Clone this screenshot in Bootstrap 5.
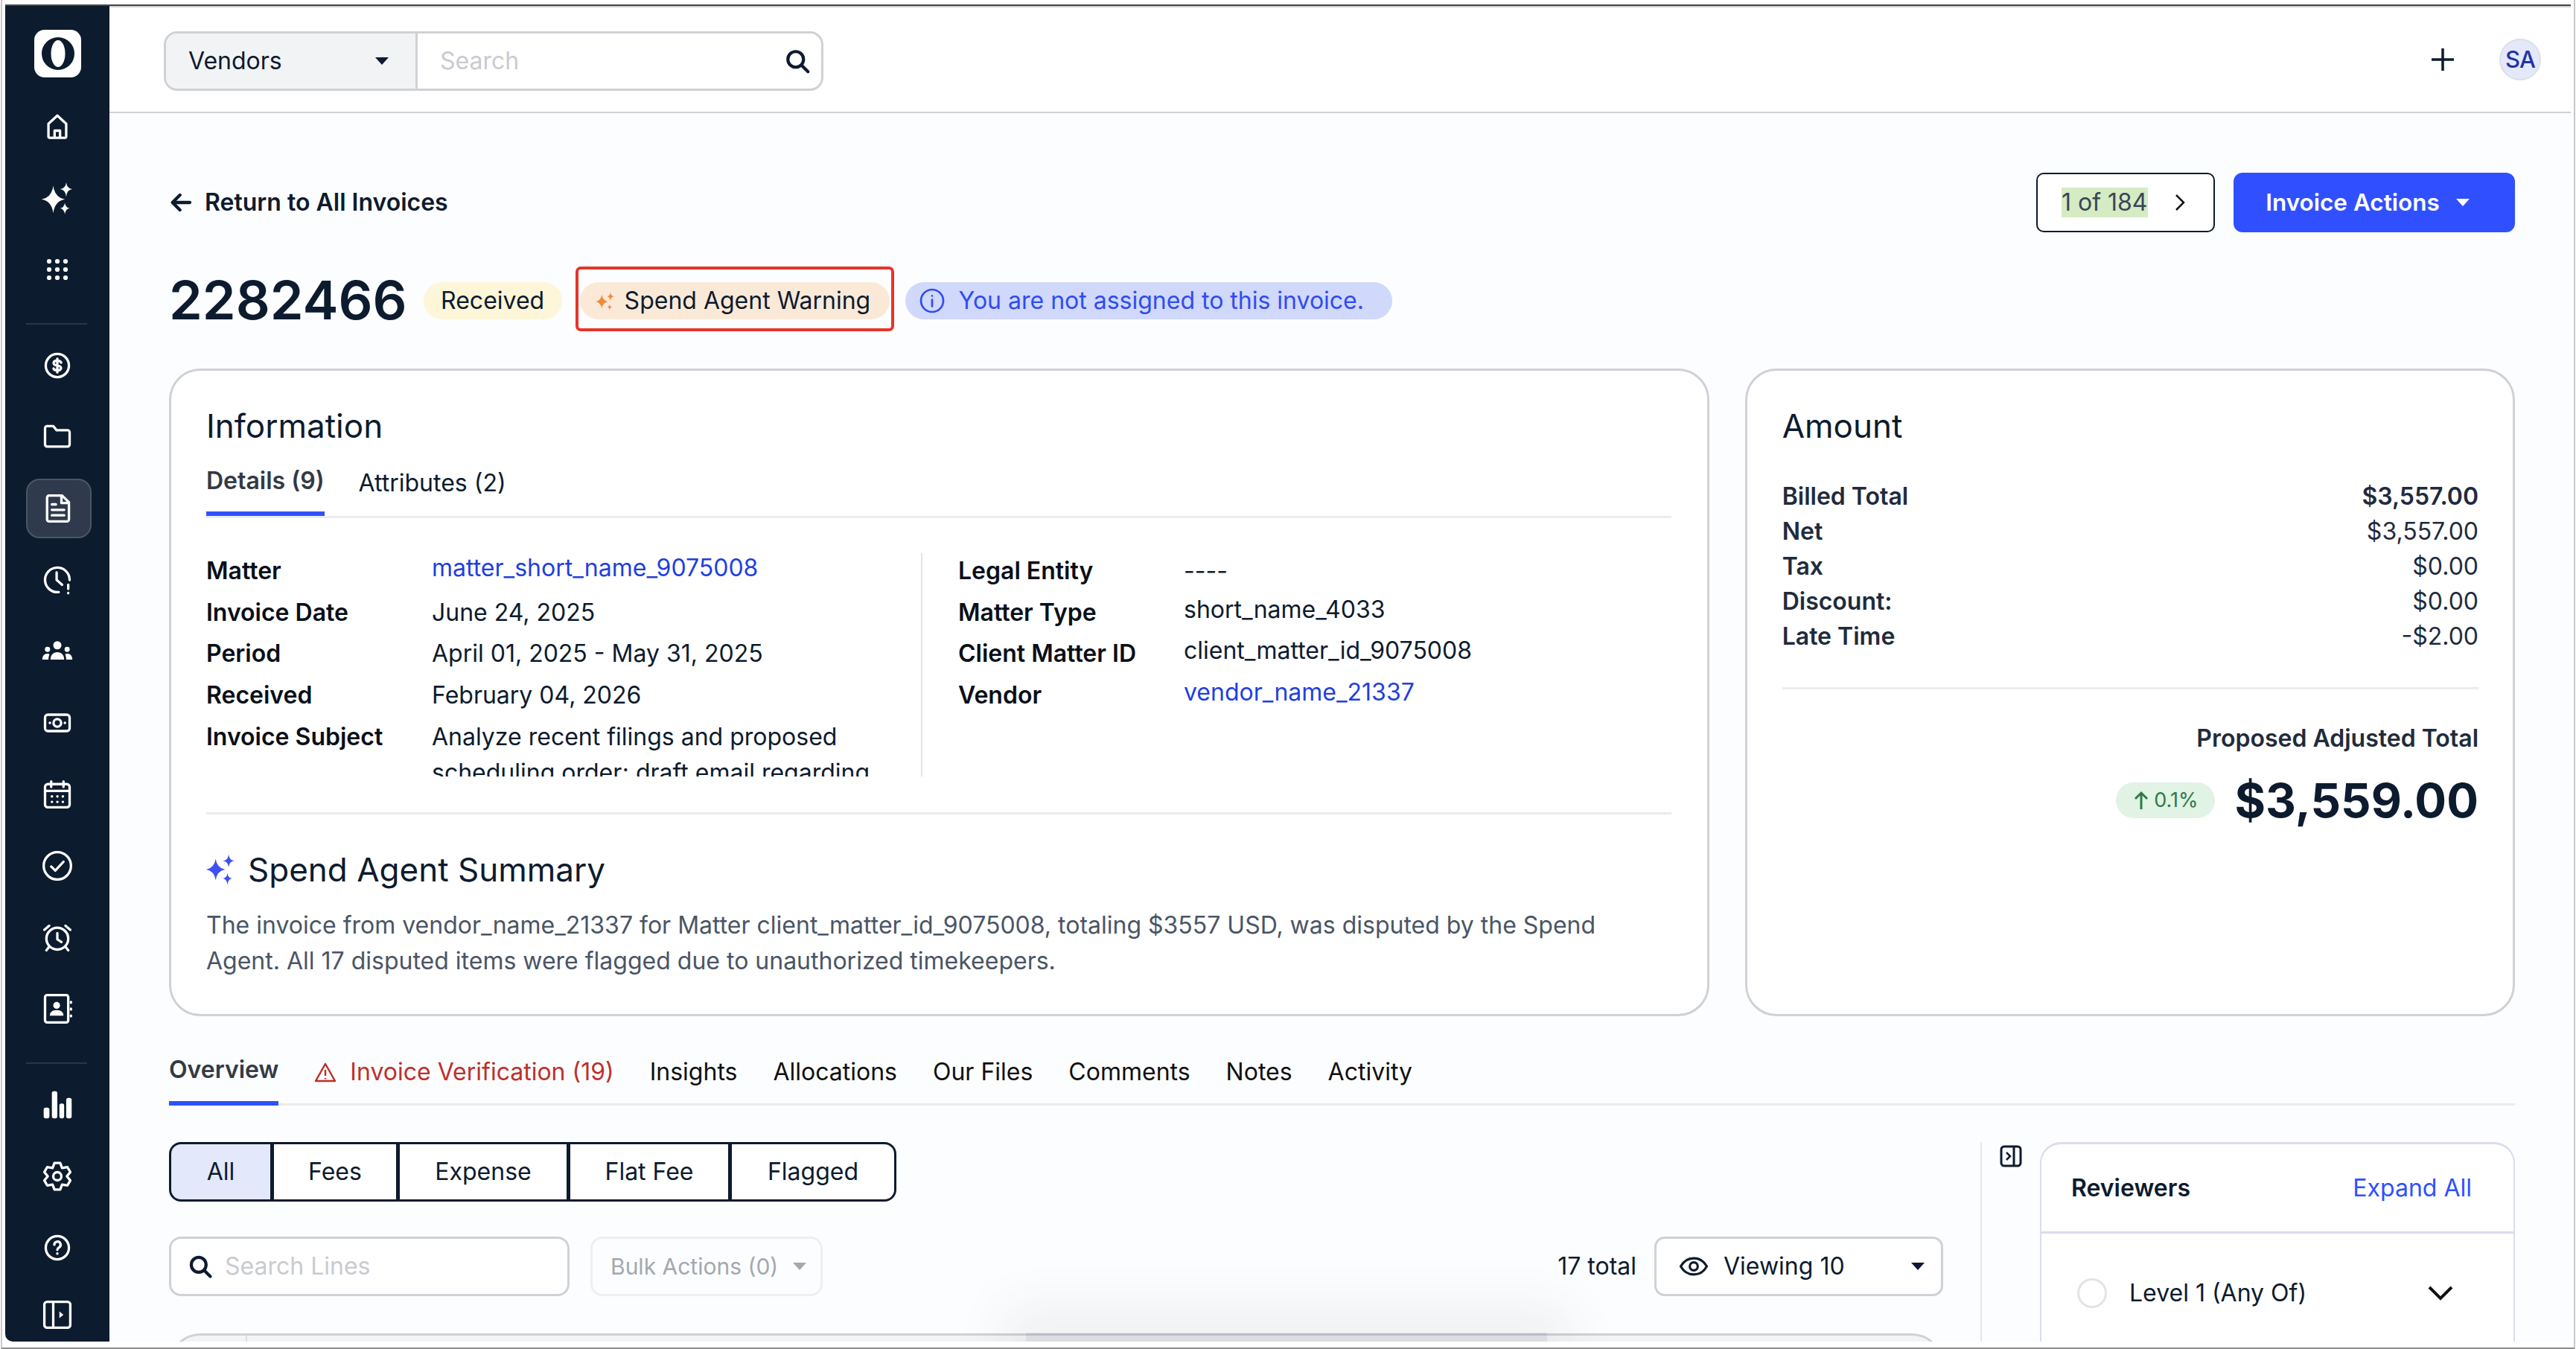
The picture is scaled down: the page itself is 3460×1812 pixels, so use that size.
<!DOCTYPE html>
<html lang="en">
<head>
    <meta charset="UTF-8">
    <meta name="viewport" content="width=device-width, initial-scale=1">
    <title>Invoice 2282466</title>
    <link href="https://cdn.jsdelivr.net/npm/bootstrap@5.3.3/dist/css/bootstrap.min.css" rel="stylesheet">
    <script src="https://cdn.jsdelivr.net/npm/bootstrap@5.3.3/dist/js/bootstrap.bundle.min.js"></script>
    <style>
        :root {
            --navy: #0d1b2e;
            --blue: #3050ff;
            --link: #1f3fe0;
            --line: #cfd1d6;
            --soft-line: #ebecf0;
        }

        html, body {
            height: 100%;
            overflow: hidden;
            background: #fff;
        }

        body {
            font-family: Inter, "Noto Sans", sans-serif;
            font-size: 32px;
            line-height: 48px;
            color: var(--navy);
        }

        /* screenshot frame round the app */
        .shot-frame {
            height: 1812px;
            margin: 0 1px;
            padding: 6px 4px 8px;
            border-left: 2px solid #c8c8c8;
            border-right: 2px solid #c8c8c8;
            border-bottom: 2px solid #8a8a8a;
        }
        .app-window {
            position: relative;
            height: 100%;
            border-top: 2px solid #444;
            overflow: hidden;
            background: #fcfdfe;
        }

        /* left rail */
        .rail {
            width: 140px;
            flex: none;
            background: var(--navy);
            color: #fff;
            border-radius: 0 0 0 10px;
        }
        .rail-logo {
            width: 63px;
            height: 64px;
            margin: 32px 0 18px 39px;
            background: #fff;
            border-radius: 14px;
        }
        .rail-slot {
            height: 96px;
            width: 100%;
        }
        .rail-slot svg {
            width: 44px;
            height: 44px;
        }
        .rail-slot.is-active span {
            width: 88px;
            height: 80px;
            margin-left: 4px;
            padding-right: 4px;
            background: #2f3b4d;
            border: 2px solid #4b5665;
            border-radius: 18px;
        }
        .rail-slot-last {
            margin-top: -6px;
        }
        .rail-rule {
            height: 2px;
            width: 82px;
            margin: 24px 0 7px 28px;
            background: #2a3647;
        }
        .ico {
            fill: none;
            stroke: currentColor;
            stroke-width: 1.8;
            stroke-linecap: round;
            stroke-linejoin: round;
        }
        .ico-fill {
            fill: currentColor;
            stroke: none;
        }

        /* top bar */
        .top-bar {
            height: 144px;
            flex: none;
            background: #fff;
            border-top: 2px solid #cfd1d6;
            border-bottom: 2px solid var(--line);
            padding: 0 40px 0 73px;
        }
        .scope-search {
            width: 886px;
            height: 80px;
            margin-top: 4px;
            border: 3px solid var(--line);
            border-radius: 18px;
            overflow: hidden;
            background: #fff;
        }
        .scope-pick {
            width: 338px;
            padding: 0 36px 0 30px;
            background: #f2f3f5;
            border-right: 3px solid var(--line);
        }
        .scope-input {
            padding: 0 14px 0 30px;
            color: #c9cbd0;
        }
        .caret-down {
            width: 0;
            height: 0;
            flex: none;
            border-left: 9px solid transparent;
            border-right: 9px solid transparent;
            border-top: 10px solid currentColor;
        }
        .avatar-sa {
            width: 56px;
            height: 56px;
            border-radius: 50%;
            background: #e4e8fb;
            border: 2px solid #dcdfe8;
            color: #1f35a8;
            font-size: 31px;
            font-weight: 500;
            letter-spacing: -1px;
        }

        /* page body */
        .page-body {
            padding: 80px 75px 0 80px;
            min-width: 0;
        }
        .back-link {
            font-weight: 600;
            color: var(--navy);
            text-decoration: none;
            gap: 16px;
        }
        .pager-btn {
            width: 240px;
            height: 80px;
            padding: 0 37px 0 32px;
            border: 2px solid var(--navy);
            border-radius: 10px;
            background: #fff;
            color: #3a4556;
            font-size: 32px;
        }
        .pager-count {
            background: #d5ebc4;
            padding: 0;
            line-height: 40px;
        }
        .action-btn {
            width: 378px;
            height: 80px;
            margin-left: 25px;
            background: var(--blue);
            color: #fff;
            border: 0;
            border-radius: 12px;
            font-size: 31.5px;
            font-weight: 600;
            gap: 22px;
            padding: 0 18px 0 0;
        }
        .title-row {
            margin-top: 46px;
            height: 87px;
        }
        .invoice-no {
            font-size: 72px;
            font-weight: 600;
            line-height: 90px;
            height: 87px;
            margin: 0 22px 0 0;
        }
        .tag-pill {
            height: 50px;
            margin-top: 4px;
            border-radius: 25px;
            padding: 0 24px;
            font-weight: 400;
            white-space: nowrap;
        }
        .tag-received {
            background: #fdf6d8;
            width: 186px;
            justify-content: center;
        }
        .warn-box {
            margin-left: 18px;
            width: 428px;
            height: 87px;
            border: 4px solid #e7342a;
            border-radius: 7px;
            padding: 0 2px;
        }
        .tag-warn {
            width: 100%;
            padding: 0 0 0 20px;
            background: #fbe9d8;
            gap: 12px;
        }
        .tag-info {
            margin-left: 15px;
            width: 654px;
            background: #d0d8fb;
            color: #2f4df0;
            padding: 0 0 0 18px;
            gap: 18px;
        }

        /* cards */
        .card-pair {
            display: grid;
            grid-template-columns: 2fr 1fr;
            gap: 48px;
            margin-top: 50px;
        }
        .panel-card {
            height: 870px;
            background: #fff;
            border: 3px solid var(--line);
            border-radius: 42px;
            padding: 46px 48px 0 47px;
        }
        .panel-amount {
            padding-right: 46px;
        }
        .panel-title {
            font-size: 44px;
            font-weight: 400;
            line-height: 56px;
            margin: 0;
        }
        .sub-tabs {
            margin-top: 22px;
            border-bottom: 3px solid var(--soft-line);
            gap: 46px;
            height: 74px;
        }
        .sub-tabs .nav-link {
            padding: 3px 0 0;
            height: 71px;
            color: var(--navy);
            line-height: 48px;
        }
        .sub-tabs .nav-link.active {
            color: #333a44;
            font-weight: 600;
            padding-top: 0;
            border-bottom: 6px solid var(--blue);
        }
        .detail-wrap {
            margin-top: 47px;
            height: 300px;
            overflow: hidden;
        }
        .detail-col {
            width: 962px;
            flex: none;
            border-right: 2px solid #e3e5ec;
            padding-right: 40px;
        }
        .detail-col-2 {
            padding-left: 48px;
            flex: 1;
        }
        .detail-grid {
            display: grid;
            grid-template-columns: 303px 1fr;
            row-gap: 7.7px;
            line-height: 48px;
        }
        .detail-grid dt {
            font-weight: 600;
            color: #0a0f18;
            margin: 0;
        }
        .detail-grid dd {
            margin: 0;
        }
        .detail-grid dd.is-raised {
            margin-top: -4px;
        }
        .detail-grid dd a {
            color: var(--link);
            text-decoration: none;
        }
        .info-rule {
            height: 3px;
            margin: 48px 0 0;
            background: var(--soft-line);
        }
        .summary-title {
            margin-top: 46px;
            gap: 18px;
        }
        .summary-copy {
            margin: 23px 0 0;
            color: #4a5565;
        }
        .amount-list {
            margin-top: 43px;
            line-height: 47px;
            color: #1f2b3c;
        }
        .amount-list b {
            font-weight: 600;
        }
        .amount-rule {
            height: 3px;
            margin-top: 45px;
            background: var(--soft-line);
        }
        .proposed {
            margin-top: 42px;
            font-weight: 600;
            color: #1f2b3c;
            text-align: right;
        }
        .proposed-total {
            margin-top: 19px;
            gap: 26px;
        }
        .delta-pill {
            background: #e0f3e4;
            color: #2f7a46;
            width: 133px;
            height: 48px;
            border-radius: 24px;
            font-size: 27px;
            gap: 6px;
        }
        .total-big {
            font-size: 63.5px;
            font-weight: 700;
            line-height: 80px;
            color: var(--navy);
        }

        /* lower tabs */
        .main-tabs {
            margin-top: 46px;
            height: 74px;
            border-bottom: 3px solid var(--soft-line);
            gap: 48px;
        }
        .main-tabs .nav-link {
            padding: 5px 0 0;
            height: 74px;
            color: #101010;
        }
        .main-tabs .nav-link.active {
            padding-top: 2px;
            color: #333a44;
            font-weight: 600;
            border-bottom: 6px solid var(--blue);
        }
        .main-tabs .nav-link.is-alert {
            color: #bf2f2a;
            display: flex;
            gap: 18px;
            align-items: flex-start;
        }

        .lower-grid {
            display: grid;
            grid-template-columns: 1fr 718px;
            margin-top: 49px;
        }
        .filter-group .btn {
            height: 80px;
            background: #fff;
            border: 3px solid var(--navy);
            color: var(--navy);
            font-size: 32px;
            padding: 0;
            border-radius: 16px;
        }
        .filter-group .btn.active {
            background: #e4e8fb;
            color: var(--navy);
        }
        .tools-row {
            margin-top: 47px;
            margin-right: 50px;
        }
        .lines-search {
            width: 538px;
            height: 80px;
            border: 3px solid var(--line);
            border-radius: 16px;
            padding: 0 22px;
            gap: 16px;
            background: #fff;
            color: #c9cbd0;
        }
        .bulk-btn {
            width: 312px;
            height: 80px;
            margin-left: 28px;
            border: 3px solid #eeeff2;
            border-radius: 16px;
            padding: 0 24px;
            color: #a4a8b0;
            font-size: 30px;
            gap: 20px;
            white-space: nowrap;
        }
        .viewing-btn {
            width: 388px;
            height: 80px;
            margin-left: 24px;
            background: #fff;
            border: 3px solid var(--line);
            border-radius: 14px;
            padding: 0 22px 0 30px;
            gap: 20px;
        }
        .lines-table {
            height: 60px;
            margin-top: 50px;
            margin-right: 50px;
            border: 3px solid var(--line);
            border-radius: 42px 42px 0 0;
            background: #f3f4f6;
            padding-left: 100px;
        }
        .lines-table div {
            height: 100%;
            border-left: 2px solid #dcdde1;
        }
        .side-col {
            border-left: 2px solid #e3e5ec;
            padding-left: 24px;
            gap: 24px;
            align-items: flex-start;
            height: 300px;
        }
        .reviewers-card {
            width: 638px;
            flex: none;
            background: #fff;
            border: 2px solid #dedbee;
            border-top-width: 3px;
            border-radius: 28px 28px 0 0;
            height: 300px;
        }
        .reviewers-head {
            height: 120px;
            padding: 0 56px 0 40px;
            border-bottom: 3px solid #dedbee;
        }
        .reviewers-head a {
            color: var(--blue);
            text-decoration: none;
        }
        .reviewers-row {
            padding: 0 80px 0 48px;
            height: 160px;
            gap: 30px;
        }
        .radio-ring {
            width: 40px;
            height: 40px;
            border-radius: 50%;
            border: 3px solid #e3e4e8;
        }
        /* smudge in the screenshot, lies over the table head */
        .shadow-blob {
            position: absolute;
            left: 1371px;
            bottom: 0;
            width: 700px;
            height: 12px;
            background: rgba(60, 60, 70, .12);
            box-shadow: 0 0 70px 30px rgba(60, 60, 70, .08);
        }
    </style>
</head>
<body>
<div class="shot-frame">
<div class="app-window d-flex">
    <aside class="rail">
        <div class="rail-logo d-flex align-items-center justify-content-center">
            <svg width="46" height="46" viewBox="0 0 46 46"><ellipse cx="23" cy="23" rx="22" ry="22" fill="#0d1b2e"/><ellipse cx="23" cy="23" rx="9.500" ry="18" fill="#fff"/></svg>
        </div>
        <div class="rail-slot d-flex align-items-center justify-content-center">
            <svg viewBox="0 0 24 24" class="ico"><path d="M12 4 5.500 10v9.200a1 1 0 0 0 1 1h11a1 1 0 0 0 1-1V10z"/><path d="M10 20v-5h4v5"/></svg>
        </div>
        <div class="rail-slot d-flex align-items-center justify-content-center">
            <svg viewBox="0 0 24 24"><g class="ico-fill"><path d="M9 3Q10.200 11.800 17.500 13Q10.200 14.200 9 23Q7.800 14.200 .5 13Q7.800 11.800 9 3Z"/><path d="M18.500 .5Q19 5 23 5.500Q19 6 18.500 11Q18 6 14 5.500Q18 5 18.500 .5Z"/><path d="M17.500 15.500Q18 19 21 19.500Q18 20 17.500 24Q17 20 14 19.500Q17 19 17.500 15.500Z"/></g></svg>
        </div>
        <div class="rail-slot d-flex align-items-center justify-content-center">
            <svg viewBox="0 0 24 24"><g class="ico-fill"><circle cx="6" cy="6" r="1.700"/><circle cx="12" cy="6" r="1.700"/><circle cx="18" cy="6" r="1.700"/><circle cx="6" cy="12" r="1.700"/><circle cx="12" cy="12" r="1.700"/><circle cx="18" cy="12" r="1.700"/><circle cx="6" cy="18" r="1.700"/><circle cx="12" cy="18" r="1.700"/><circle cx="18" cy="18" r="1.700"/></g></svg>
        </div>
        <div class="rail-rule"></div>
        <div class="rail-slot d-flex align-items-center justify-content-center">
            <svg viewBox="0 0 24 24" class="ico"><circle cx="12" cy="12" r="8.500"/><path d="M14.800 9.800c-.4-.9-1.400-1.400-2.800-1.400-1.600 0-2.700.7-2.700 1.800s1 1.500 2.700 1.800 2.700.7 2.700 1.800-1.100 1.800-2.700 1.800c-1.400 0-2.400-.5-2.800-1.400M12 7v10"/></svg>
        </div>
        <div class="rail-slot d-flex align-items-center justify-content-center">
            <svg viewBox="0 0 24 24" class="ico"><path d="M3 5.500A1.500 1.500 0 0 1 4.500 4H9l2.500 3h8A1.500 1.500 0 0 1 21 8.500v9a1.500 1.500 0 0 1-1.500 1.500h-15A1.500 1.500 0 0 1 3 17.500z"/></svg>
        </div>
        <div class="rail-slot is-active d-flex align-items-center justify-content-center">
            <span class="d-flex align-items-center justify-content-center">
                <svg viewBox="0 0 24 24" class="ico"><path d="M4.500 4A1.500 1.500 0 0 1 6 2.500h9.500l5 5V20a1.500 1.500 0 0 1-1.500 1.500H6A1.500 1.500 0 0 1 4.500 20z"/><path d="M15 3v5h5M8 9h3M8 13h9M8 17h9"/></svg>
            </span>
        </div>
        <div class="rail-slot d-flex align-items-center justify-content-center">
            <svg viewBox="0 0 24 24" class="ico"><path d="M21 12A9 9 0 1 0 13 20.900"/><path d="M11.500 6.500V12l4 3.500"/><path d="M20 15.500v3M20 21.500v.2"/></svg>
        </div>
        <div class="rail-slot d-flex align-items-center justify-content-center">
            <svg viewBox="0 0 24 24"><g class="ico-fill"><circle cx="12" cy="7.500" r="3"/><path d="M7 18c0-3.500 2-5.500 5-5.500s5 2 5 5.500z"/><circle cx="4.800" cy="10.500" r="1.900"/><path d="M1 18c0-2.500 1.300-4.300 3.800-4.300.6 0 1.100.1 1.500.3-.5 1.100-.8 2.500-.8 4z"/><circle cx="19.200" cy="10.500" r="1.900"/><path d="M23 18c0-2.500-1.300-4.300-3.800-4.300-.6 0-1.100.1-1.500.3.5 1.100.8 2.500.8 4z"/></g></svg>
        </div>
        <div class="rail-slot d-flex align-items-center justify-content-center">
            <svg viewBox="0 0 24 24" class="ico"><rect x="3" y="6" width="18" height="12" rx="2"/><circle cx="12" cy="12" r="2.800"/><path d="M6.500 12h.1M17.500 12h.1"/></svg>
        </div>
        <div class="rail-slot d-flex align-items-center justify-content-center">
            <svg viewBox="0 0 24 24" class="ico"><rect x="3" y="4.500" width="18" height="17" rx="2"/><path d="M3 9.500h18M7.500 2.500v4M16.500 2.500v4M8 13.500h.1M12 13.500h.1M16 13.500h.1M8 17.500h.1M12 17.500h.1M16 17.500h.1"/></svg>
        </div>
        <div class="rail-slot d-flex align-items-center justify-content-center">
            <svg viewBox="0 0 24 24" class="ico"><circle cx="12" cy="12" r="10"/><path d="M7.500 12.500l3 3 6-6.500"/></svg>
        </div>
        <div class="rail-slot d-flex align-items-center justify-content-center">
            <svg viewBox="0 0 24 24" class="ico"><circle cx="12" cy="13" r="8"/><path d="M12 9v4.500l3 2M2.500 6.500 6 3.500M21.500 6.500 18 3.500M6 19l-2 2.500M18 19l2 2.500"/></svg>
        </div>
        <div class="rail-slot d-flex align-items-center justify-content-center">
            <svg viewBox="0 0 24 24" class="ico"><rect x="3" y="2" width="17" height="20" rx="1.500"/><path d="M22 7v.5M22 12v.5M22 17v.5"/><circle cx="11.500" cy="9.500" r="2.500" class="ico-fill"/><path d="M6.500 17c0-2.500 2-4 5-4s5 1.500 5 4z" class="ico-fill"/></svg>
        </div>
        <div class="rail-rule"></div>
        <div class="rail-slot d-flex align-items-center justify-content-center">
            <svg viewBox="0 0 24 24"><g class="ico-fill"><rect x="2" y="14" width="4.200" height="8" rx="1.500"/><rect x="8" y="2" width="4" height="20" rx="1.500"/><rect x="13.500" y="11" width="3.500" height="11" rx="1.500"/><rect x="18.500" y="7" width="4" height="15" rx="1.500"/></g></svg>
        </div>
        <div class="rail-slot d-flex align-items-center justify-content-center">
            <svg viewBox="0 0 24 24" class="ico"><path d="M9.920 2.220H14.080L15.500 5.940 19.430 5.310 21.510 8.910 19 12 21.510 15.090 19.430 18.690 15.500 18.060 14.080 21.780H9.920L8.500 18.060 4.570 18.690 2.490 15.090 5 12 2.490 8.910 4.570 5.310 8.500 5.940Z"/><circle cx="12" cy="12" r="3"/></svg>
        </div>
        <div class="rail-slot d-flex align-items-center justify-content-center">
            <svg viewBox="0 0 24 24" class="ico"><circle cx="12" cy="12" r="8.500"/><path d="M9.800 9.800a2.300 2.300 0 1 1 3.400 2c-.8.500-1.200.9-1.200 1.700M12 16.200v.1"/></svg>
        </div>
        <div class="rail-slot rail-slot-last d-flex align-items-center justify-content-center">
            <svg viewBox="0 0 24 24" class="ico"><rect x="2.500" y="2.500" width="19" height="19" rx="2"/><path d="M9 2.500v19"/><path d="M13.500 9.500l3 2.500-3 2.500z" class="ico-fill"/></svg>
        </div>
    </aside>

    <div class="flex-grow-1 d-flex flex-column" style="min-width:0">
        <header class="top-bar d-flex align-items-center justify-content-between">
            <div class="scope-search d-flex">
                <div class="scope-pick d-flex align-items-center justify-content-between">Vendors <span class="caret-down"></span></div>
                <div class="scope-input flex-grow-1 d-flex align-items-center justify-content-between">
                    <span>Search</span>
                    <svg width="36" height="36" viewBox="0 0 24 24" fill="none" stroke="#0d1b2e" stroke-width="2.800" stroke-linecap="round"><circle cx="10.500" cy="10.500" r="7"/><path d="M16 16l5.500 5.500"/></svg>
                </div>
            </div>
            <div class="d-flex align-items-center" style="gap:60px">
                <svg width="32" height="32" viewBox="0 0 32 32" stroke="#0d1b2e" stroke-width="3.500"><path d="M16 1v30M1 16h30"/></svg>
                <div class="avatar-sa d-flex align-items-center justify-content-center">SA</div>
            </div>
        </header>

        <main class="page-body flex-grow-1">
            <div class="d-flex align-items-center justify-content-between">
                <a href="#" class="back-link d-flex align-items-center">
                    <svg width="32" height="32" viewBox="0 0 24 24" fill="none" stroke="#0d1b2e" stroke-width="3.200" stroke-linecap="round" stroke-linejoin="round"><path d="M21 12H4M11 4.500 3.500 12l7.500 7.500"/></svg>
                    Return to All Invoices
                </a>
                <div class="d-flex">
                    <button class="btn pager-btn d-flex align-items-center justify-content-between" type="button">
                        <span class="pager-count">1 of 184</span>
                        <svg width="16" height="24" viewBox="0 0 16 24" fill="none" stroke="#111" stroke-width="2.500"><path d="M3 2l10 10L3 22"/></svg>
                    </button>
                    <button class="btn action-btn d-flex align-items-center justify-content-center" type="button">Invoice Actions <span class="caret-down"></span></button>
                </div>
            </div>

            <div class="title-row d-flex align-items-center">
                <h1 class="invoice-no">2282466</h1>
                <span class="tag-pill tag-received d-flex align-items-center">Received</span>
                <div class="warn-box d-flex align-items-center">
                    <span class="tag-pill tag-warn d-flex align-items-center">
                        <svg width="28" height="28" viewBox="0 0 24 24" fill="#f08a3c"><path d="M8 5Q9 12 15 13Q9 14 8 21Q7 14 1 13Q7 12 8 5Z"/><path d="M18 2Q18.400 6.600 22 7Q18.400 7.400 18 12Q17.600 7.400 14 7Q17.600 6.600 18 2Z"/><path d="M17 16Q17.300 18.700 20 19Q17.300 19.300 17 23Q16.700 19.300 14 19Q16.700 18.700 17 16Z"/></svg>
                        Spend Agent Warning
                    </span>
                </div>
                <span class="tag-pill tag-info d-flex align-items-center">
                    <svg width="36" height="36" viewBox="0 0 24 24" fill="none" stroke="#2f4df0" stroke-width="1.800" stroke-linecap="round"><circle cx="12" cy="12" r="10"/><path d="M12 11v6M12 7.500v.1"/></svg>
                    You are not assigned to this invoice.
                </span>
            </div>

            <div class="card-pair">
                <section class="panel-card">
                    <h2 class="panel-title">Information</h2>
                    <ul class="nav sub-tabs">
                        <li class="nav-item"><a class="nav-link active" href="#">Details (9)</a></li>
                        <li class="nav-item"><a class="nav-link" href="#">Attributes (2)</a></li>
                    </ul>
                    <div class="detail-wrap d-flex">
                        <div class="detail-col">
                            <dl class="detail-grid m-0">
                                <dt>Matter</dt><dd class="is-raised"><a href="#">matter_short_name_9075008</a></dd>
                                <dt>Invoice Date</dt><dd>June 24, 2025</dd>
                                <dt>Period</dt><dd>April 01, 2025 - May 31, 2025</dd>
                                <dt>Received</dt><dd>February 04, 2026</dd>
                                <dt>Invoice Subject</dt><dd>Analyze recent filings and proposed scheduling order; draft email regarding</dd>
                            </dl>
                        </div>
                        <div class="detail-col-2">
                            <dl class="detail-grid m-0">
                                <dt>Legal Entity</dt><dd>----</dd>
                                <dt>Matter Type</dt><dd class="is-raised">short_name_4033</dd>
                                <dt>Client Matter ID</dt><dd class="is-raised">client_matter_id_9075008</dd>
                                <dt>Vendor</dt><dd class="is-raised"><a href="#">vendor_name_21337</a></dd>
                            </dl>
                        </div>
                    </div>
                    <div class="info-rule"></div>
                    <div class="summary-title d-flex align-items-center">
                        <svg width="38" height="42" viewBox="0 0 24 26" fill="#3f4ff0"><path d="M8 4Q9.200 11.800 16 13Q9.200 14.200 8 22Q6.800 14.200 0 13Q6.800 11.800 8 4Z"/><path d="M19 0Q19.400 5.100 24 5.500Q19.400 5.900 19 11Q18.600 5.900 14 5.500Q18.600 5.100 19 0Z"/><path d="M18 16Q18.400 20.100 22 20.500Q18.400 20.900 18 26Q17.600 20.900 14 20.500Q17.600 20.100 18 16Z"/></svg>
                        <h2 class="panel-title">Spend Agent Summary</h2>
                    </div>
                    <p class="summary-copy">The invoice from vendor_name_21337 for Matter client_matter_id_9075008, totaling $3557 USD, was disputed by the Spend Agent. All 17 disputed items were flagged due to unauthorized timekeepers.</p>
                </section>

                <section class="panel-card panel-amount">
                    <h2 class="panel-title">Amount</h2>
                    <div class="amount-list">
                        <div class="d-flex justify-content-between"><b>Billed Total</b><b>$3,557.00</b></div>
                        <div class="d-flex justify-content-between"><b>Net</b><span>$3,557.00</span></div>
                        <div class="d-flex justify-content-between"><b>Tax</b><span>$0.00</span></div>
                        <div class="d-flex justify-content-between"><b>Discount:</b><span>$0.00</span></div>
                        <div class="d-flex justify-content-between"><b>Late Time</b><span>-$2.00</span></div>
                    </div>
                    <div class="amount-rule"></div>
                    <div class="proposed">Proposed Adjusted Total</div>
                    <div class="proposed-total d-flex align-items-center justify-content-end">
                        <span class="delta-pill d-flex align-items-center justify-content-center">
                            <svg width="22" height="26" viewBox="0 0 22 26" fill="none" stroke="#2f7a46" stroke-width="3"><path d="M11 25V3M3 11l8-8 8 8"/></svg>
                            0.1%
                        </span>
                        <span class="total-big">$3,559.00</span>
                    </div>
                </section>
            </div>

            <ul class="nav main-tabs">
                <li class="nav-item"><a class="nav-link active" href="#">Overview</a></li>
                <li class="nav-item">
                    <a class="nav-link is-alert" href="#">
                        <svg class="mt-2" width="30" height="32" viewBox="0 0 30 32" fill="none" stroke="#bf2f2a" stroke-width="2.500" stroke-linejoin="round"><path d="M15 5 2 28h26z"/><path d="M15 13v8M15 24v1.500"/></svg>
                        Invoice Verification (19)
                    </a>
                </li>
                <li class="nav-item"><a class="nav-link" href="#">Insights</a></li>
                <li class="nav-item"><a class="nav-link" href="#">Allocations</a></li>
                <li class="nav-item"><a class="nav-link" href="#">Our Files</a></li>
                <li class="nav-item"><a class="nav-link" href="#">Comments</a></li>
                <li class="nav-item"><a class="nav-link" href="#">Notes</a></li>
                <li class="nav-item"><a class="nav-link" href="#">Activity</a></li>
            </ul>

            <div class="lower-grid">
                <div>
                    <div class="btn-group filter-group" role="group">
                        <button type="button" class="btn active" style="width:139px">All</button>
                        <button type="button" class="btn" style="width:170px">Fees</button>
                        <button type="button" class="btn" style="width:230px">Expense</button>
                        <button type="button" class="btn" style="width:218px">Flat Fee</button>
                        <button type="button" class="btn" style="width:224px">Flagged</button>
                    </div>
                    <div class="tools-row d-flex align-items-center">
                        <div class="lines-search d-flex align-items-center">
                            <svg width="34" height="34" viewBox="0 0 24 24" fill="none" stroke="#0d1b2e" stroke-width="3" stroke-linecap="round"><circle cx="10.500" cy="10.500" r="7"/><path d="M16 16l5.500 5.500"/></svg>
                            <span>Search Lines</span>
                        </div>
                        <div class="bulk-btn d-flex align-items-center">Bulk Actions (0) <span class="caret-down"></span></div>
                        <div class="ms-auto">17 total</div>
                        <div class="viewing-btn d-flex align-items-center">
                            <svg width="40" height="40" viewBox="0 0 24 24" fill="none" stroke="#0d1b2e" stroke-width="1.900"><path d="M1.500 12C4 7.500 7.500 5.500 12 5.500S20 7.500 22.500 12C20 16.500 16.500 18.500 12 18.500S4 16.500 1.500 12Z"/><circle cx="12" cy="12" r="3.200"/></svg>
                            <span class="flex-grow-1">Viewing 10</span>
                            <span class="caret-down"></span>
                        </div>
                    </div>
                    <div class="lines-table"><div></div></div>
                </div>
                <div class="side-col d-flex">
                    <svg class="mt-1" width="30" height="30" viewBox="0 0 30 30" fill="none" stroke="#0d1b2e" stroke-width="3" style="flex:none"><rect x="2" y="2" width="26" height="26" rx="4"/><path d="M19 2v26"/><path d="M9 10l5 5-5 5" stroke-width="2.500"/></svg>
                    <div class="reviewers-card">
                        <div class="reviewers-head d-flex align-items-center justify-content-between">
                            <span class="fw-semibold">Reviewers</span>
                            <a href="#">Expand All</a>
                        </div>
                        <div class="reviewers-row d-flex align-items-center">
                            <span class="radio-ring"></span>
                            <span class="flex-grow-1">Level 1 (Any Of)</span>
                            <svg width="36" height="22" viewBox="0 0 36 22" fill="none" stroke="#111" stroke-width="4"><path d="M3 3l15 15L33 3"/></svg>
                        </div>
                    </div>
                </div>
            </div>
        </main>
    </div>
    <div class="shadow-blob"></div>
</div>
</div>
</body>
</html>
